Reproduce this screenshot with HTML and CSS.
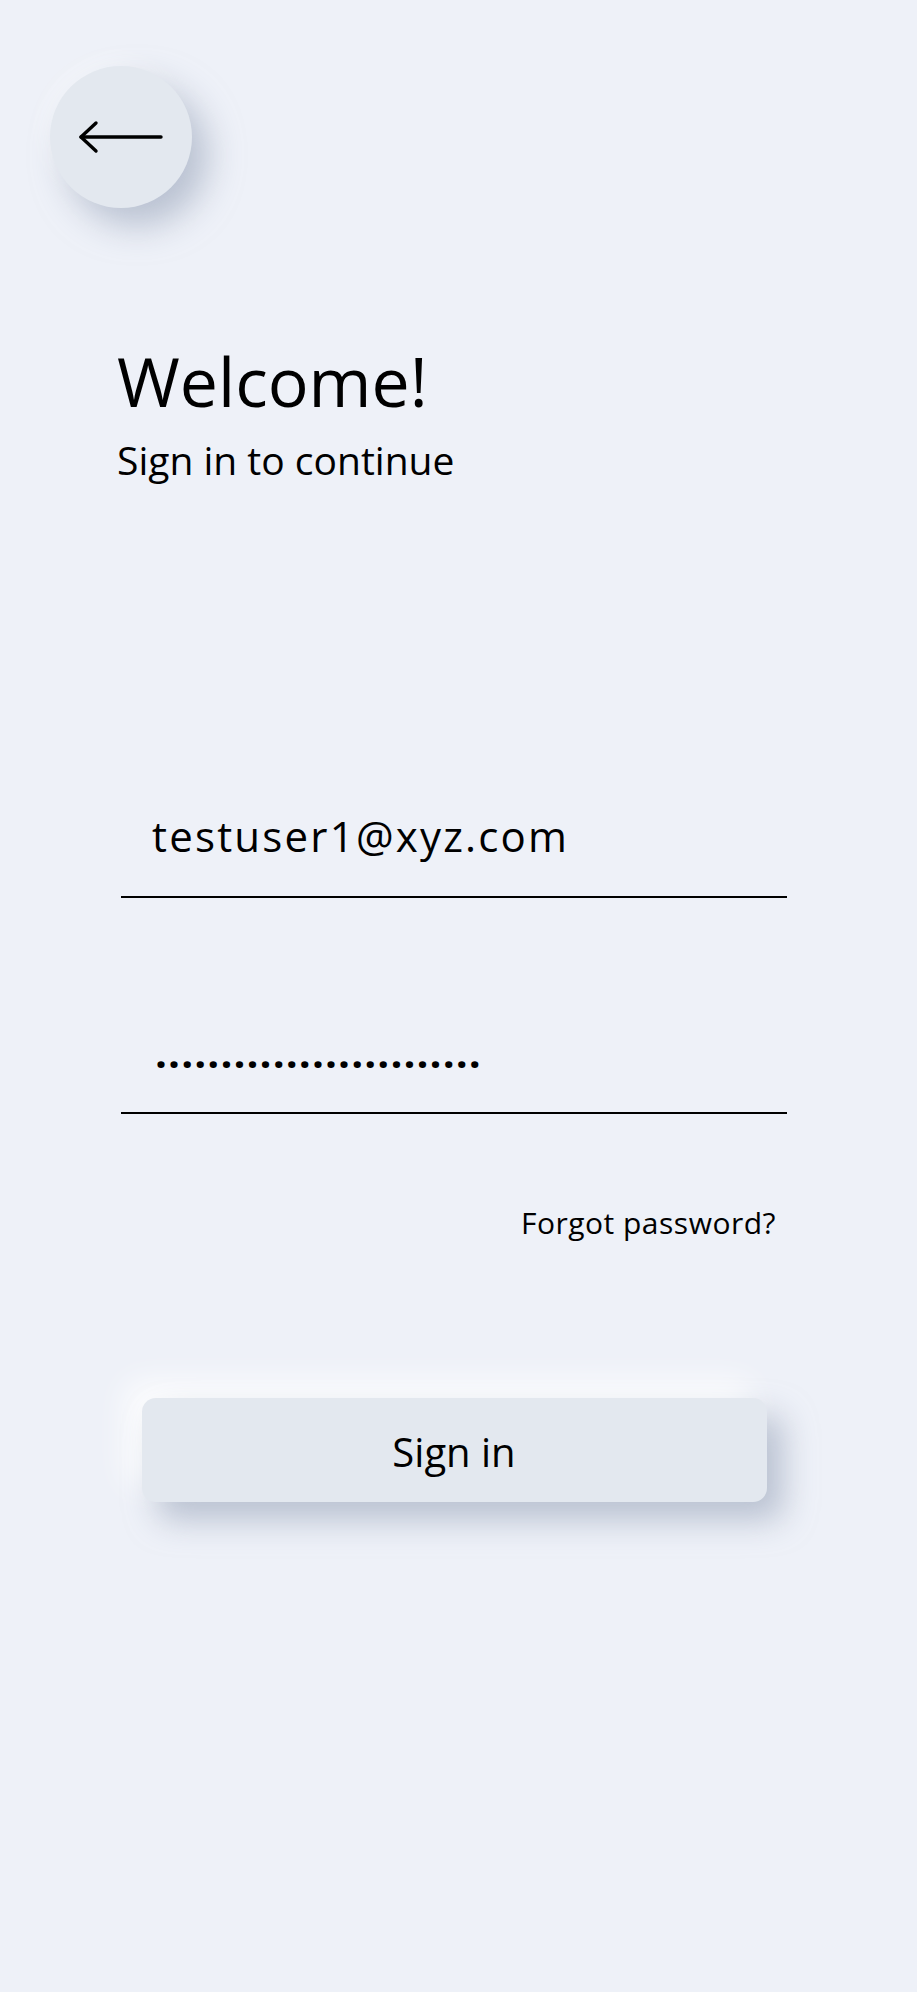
FILE: index.html
```html
<!DOCTYPE html>
<html lang="en">
<head>
<meta charset="utf-8">
<title>Sign in</title>
<link rel="stylesheet" href="styles.css">
</head>
<body>
<div class="page">
  <button class="back" type="button" aria-label="Back">
    <svg width="86" height="34" viewBox="0 0 86 34" fill="none" stroke="#000" stroke-width="3.4" stroke-linecap="round" stroke-linejoin="round">
      <path d="M3 17 H83"/>
      <path d="M18 3 L3 17 L18 31"/>
    </svg>
  </button>

  <div class="heading">
    <h1 class="title">Welcome!</h1>
    <p class="subtitle">Sign in to continue</p>
  </div>

  <form class="form">
    <div class="field">
      <span class="value email">testuser1@xyz.com</span>
    </div>
    <div class="field field-pass">
      <span class="value dots">.........................</span>
    </div>
    <div class="forgot-row">
      <a class="forgot" href="#">Forgot password?</a>
    </div>
    <button class="signin" type="button">Sign in</button>
  </form>
</div>
</body>
</html>
```

FILE: styles.css
```css
* { box-sizing: border-box; }

html, body {
  margin: 0;
  padding: 0;
  background: #eef1f8;
}

body {
  font-family: "Open Sans", "Noto Sans", sans-serif;
  color: #000;
  min-height: 1992px;
}

.page {
  display: flex;
  flex-direction: column;
}

.back {
  margin: 66px 0 0 50px;
  width: 142px;
  height: 142px;
  border-radius: 50%;
  border: none;
  padding: 0;
  background: #e3e8ef;
  display: flex;
  align-items: center;
  justify-content: center;
  box-shadow: 16px 18px 34px rgba(150, 162, 184, 0.6), -8px -8px 20px rgba(255, 255, 255, 0.35);
}

.heading {
  margin: 133px 0 0 117px;
}

.title {
  margin: 0;
  font-size: 68px;
  line-height: 80px;
  font-weight: 500;
}

.subtitle {
  margin: 15px 0 0 0;
  font-size: 39px;
  line-height: 48px;
  font-weight: 500;
}

.form {
  margin: 324px 0 0 121px;
  width: 666px;
  display: flex;
  flex-direction: column;
}

.field {
  padding: 0 0 32px 31px;
  border-bottom: 2px solid #000;
}

.field-pass {
  margin-top: 126px;
  padding-left: 34px;
}

.value {
  display: block;
  font-size: 42px;
  line-height: 56px;
  font-weight: 500;
}

.email {
  letter-spacing: 2.2px;
}

.dots {
  letter-spacing: 1.1px;
  font-weight: 700;
}

.forgot-row {
  margin-top: 89px;
  display: flex;
  justify-content: flex-end;
  padding-right: 11px;
}

.forgot {
  color: #000;
  text-decoration: none;
  font-size: 30px;
  line-height: 40px;
  font-weight: 500;
  letter-spacing: 0.5px;
}

.signin {
  margin: 155px auto 0 auto;
  width: 625px;
  height: 104px;
  border: none;
  border-radius: 14px;
  background: #e3e8ef;
  font-family: "Open Sans", "Noto Sans", sans-serif;
  font-size: 40px;
  font-weight: 500;
  color: #000;
  padding: 3px 0 0 0;
  box-shadow: 16px 18px 32px rgba(150, 162, 184, 0.6), -16px -16px 32px rgba(255, 255, 255, 0.9);
}
```
